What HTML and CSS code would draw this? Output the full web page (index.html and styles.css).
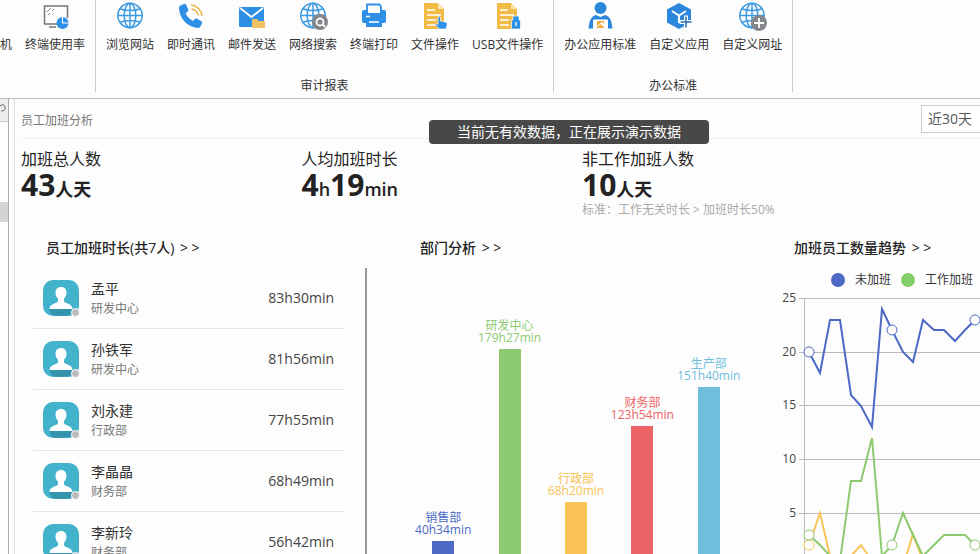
FILE: index.html
```html
<!DOCTYPE html>
<html lang="zh-CN">
<head>
    <meta charset="UTF-8">
    <meta name="viewport" content="width=device-width, initial-scale=1.0">
    <title>员工加班分析</title>
    <link rel="stylesheet" href="styles.css">
</head>
<body>

    <!-- Shared shapes -->
    <svg class="defs" width="0" height="0" aria-hidden="true">
        <symbol id="globe" viewBox="0 0 28 28">
            <g fill="none" stroke="#3d9be0" stroke-width="1.5">
                <circle cx="14" cy="14.5" r="12.2"/>
                <ellipse cx="14" cy="14.5" rx="5.8" ry="12.2"/>
                <path d="M14 2.3v24.4M1.8 14.5h24.4M4 7.8c5 2.4 15 2.4 20 0M4 21.2c5-2.4 15-2.4 20 0"/>
            </g>
        </symbol>
        <symbol id="doc" viewBox="0 0 28 28">
            <path fill="#f2bb45" d="M3 2h14l6 6v20H3z"/>
            <path fill="#fbe3ae" d="M17 2v6h6z"/>
            <path stroke="#fff" stroke-width="1.4" d="M6 9h8M6 14h14M6 19h9M6 24h9"/>
        </symbol>
        <symbol id="avatar" viewBox="0 0 36 36">
            <rect width="36" height="36" rx="10" fill="#43b2cb"/>
            <path fill="#3594ad" d="M6 29h24l-3 6c-4 1-14 1-18 0z"/>
            <path fill="#fff" d="M18 7c3.500 0 5.500 2.400 5.500 5.800 0 2.600-1 4.600-2.500 6v2.700c1 2 8.500 2.200 8.500 7.500h-23c0-5.300 7.500-5.500 8.500-7.500v-2.700c-1.500-1.400-2.500-3.400-2.500-6C12.500 9.400 14.500 7 18 7z"/>
        </symbol>
    </svg>

    <!-- Ribbon -->
    <nav class="ribbon">
        <div class="group group-first">
            <div class="tools">
                <button class="tool">
                    <svg class="icon"></svg>
                    <span>机</span>
                </button>
                <button class="tool">
                    <svg class="icon" viewBox="0 0 28 28">
                        <path fill="none" stroke="#777" stroke-width="1.500" d="M16 23H3.500V5h23v12"/>
                        <path fill="none" stroke="#888" d="M6 11l4-4M7 14l2-2M11 10l2-2"/>
                        <path stroke="#777" stroke-width="1.500" d="M8 26h7"/>
                        <circle cx="21.500" cy="22" r="6" fill="#2d8fe6"/>
                        <path fill="none" stroke="#fff" stroke-width="1.200" d="M21.500 15v7h6"/>
                    </svg>
                    <span>终端使用率</span>
                </button>
            </div>
        </div>

        <div class="group">
            <div class="tools">
                <button class="tool">
                    <svg class="icon"><use href="#globe"/></svg>
                    <span>浏览网站</span>
                </button>
                <button class="tool">
                    <svg class="icon" viewBox="0 0 28 28">
                        <path fill="#2d8fe6" d="M3.500 4.500L7 3c1-.4 1.800 0 2.200.8l2 4.500c.4 1 .1 1.600-.6 2.200l-1.900 1.700c1.500 3.500 4 6 7.300 7.800l1.900-1.900c.6-.6 1.400-.8 2.200-.3l4.200 2.500c.9.5 1 1.300.6 2.200l-1.500 3.100c-.5 1-1.400 1.500-2.700 1.300C10.500 26 3.200 18.500 2 8c-.1-1.600.4-2.900 1.500-3.500z"/>
                        <path fill="none" stroke="#eeb84c" stroke-width="1.500" d="M14 4c6 .5 10.500 5 11 11M14.500 8c3.500.5 6 3 6.500 6.500"/>
                    </svg>
                    <span>即时通讯</span>
                </button>
                <button class="tool">
                    <svg class="icon" viewBox="0 0 28 28">
                        <rect x="1" y="6" width="25" height="20" rx="1.500" fill="#2d8fe6"/>
                        <path fill="none" stroke="#fff" stroke-width="1.800" d="M2 7l11.500 9L25 7"/>
                        <path fill="#f2c262" d="M14 18h5l1.500 2H27v7H14z"/>
                    </svg>
                    <span>邮件发送</span>
                </button>
                <button class="tool">
                    <svg class="icon" viewBox="0 0 28 28">
                        <use href="#globe" width="28" height="28"/>
                        <circle cx="21" cy="21" r="8" fill="#85858c"/>
                        <circle cx="21" cy="21" r="3.500" fill="none" stroke="#fff" stroke-width="1.800"/>
                        <path stroke="#fff" stroke-width="1.800" d="M23.500 23.500l3 2.500"/>
                    </svg>
                    <span>网络搜索</span>
                </button>
                <button class="tool">
                    <svg class="icon" viewBox="0 0 28 28">
                        <path fill="none" stroke="#2d8fe6" stroke-width="1.800" d="M7 11V3.500h12.500l1.500 2V11"/>
                        <path fill="#2d8fe6" d="M4 9h4v3h12V9h4q2 0 2 2v9q0 2-2 2h-2v4H6v-4H4q-2 0-2-2v-9q0-2 2-2z"/>
                        <path stroke="#fff" stroke-width="1.500" d="M6 15.500h4M9 21h10"/>
                    </svg>
                    <span>终端打印</span>
                </button>
                <button class="tool">
                    <svg class="icon" viewBox="0 0 28 28">
                        <use href="#doc" width="28" height="28"/>
                        <path fill="#2d8fe6" stroke="#fff" stroke-width=".7" d="M17 16q1.500-1 2.500 0v4l5.500 1.200q1.500.5 1.200 2L25 28h-6.500L14 23.500q1-1.500 3 0z"/>
                    </svg>
                    <span>文件操作</span>
                </button>
                <button class="tool">
                    <svg class="icon" viewBox="0 0 28 28">
                        <use href="#doc" width="28" height="28"/>
                        <path fill="#2d8fe6" stroke="#fff" stroke-width=".7" d="M19 15h6v4h1.500v9h-9v-9H19z"/>
                        <path stroke="#fff" stroke-width="1.300" d="M22 21v4"/>
                    </svg>
                    <span>USB文件操作</span>
                </button>
            </div>
            <div class="group-name">审计报表</div>
        </div>

        <div class="group">
            <div class="tools">
                <button class="tool">
                    <svg class="icon" viewBox="0 0 28 28">
                        <circle cx="14.500" cy="7" r="6" fill="#2a87dc"/>
                        <path fill="#2a87dc" d="M10 14l4.500 2 4.500-2c4 1 6.500 4 7.500 13.500h-24C3.500 18 6 15 10 14z"/>
                        <rect x="7" y="18.500" width="15" height="9.500" rx="1" fill="#fff"/>
                        <path fill="#efae3f" d="M11 20h7v3l-2-2-5 4zM10 27l4.500-4 4.500 4z"/>
                    </svg>
                    <span>办公应用标准</span>
                </button>
                <button class="tool">
                    <svg class="icon" viewBox="0 0 28 28">
                        <path fill="#2a87dc" d="M14 2l12 6.500v13L14 28 2 21.500v-13z"/>
                        <path fill="none" stroke="#fff" stroke-width="2" d="M7 10l7 4.500 7-4.500M14 14.500V22"/>
                        <path stroke="#fff" stroke-width="4" d="M14.500 21h13M21 14.500v13"/>
                        <path stroke="#2a70b8" stroke-width="1.500" d="M15.500 21h11M21 15.500v11"/>
                    </svg>
                    <span>自定义应用</span>
                </button>
                <button class="tool">
                    <svg class="icon" viewBox="0 0 28 28">
                        <use href="#globe" width="28" height="28"/>
                        <circle cx="21" cy="22" r="8" fill="#85858c"/>
                        <path stroke="#fff" stroke-width="1.800" d="M16 22h10M21 17v10"/>
                    </svg>
                    <span>自定义网址</span>
                </button>
            </div>
            <div class="group-name">办公标准</div>
        </div>
    </nav>

    <div class="main">
        <!-- Collapsed tree on the left -->
        <aside class="sidebar">
            <button class="search" aria-label="搜索">
                <svg width="8" height="12" viewBox="0 0 8 12"><path fill="none" stroke="#666" d="M0 4q4-3 5 1t-4 4"/></svg>
            </button>
            <div class="thumb"></div>
        </aside>

        <section class="panel">
            <header class="panel-header">
                <span class="panel-title">员工加班分析</span>
                <select class="range" aria-label="时间范围">
                    <option>近30天</option>
                </select>
            </header>
            <div class="toast" role="status">当前无有效数据，正在展示演示数据</div>

            <div class="dashboard">
                <div class="stats">
                    <div class="stat">
                        <div class="stat-name">加班总人数</div>
                        <div class="stat-value"><b>43</b>人天</div>
                    </div>
                    <div class="stat">
                        <div class="stat-name">人均加班时长</div>
                        <div class="stat-value"><b>4</b>h<b>19</b>min</div>
                    </div>
                    <div class="stat">
                        <div class="stat-name">非工作加班人数</div>
                        <div class="stat-value"><b>10</b>人天</div>
                        <div class="stat-note">标准：工作无关时长 &gt; 加班时长50%</div>
                    </div>
                </div>

                <div class="charts">
                    <!-- Employee ranking -->
                    <div class="chart">
                        <h2><a href="#">员工加班时长(共7人) <span class="more">&gt; &gt;</span></a></h2>
                        <div class="ranking">
                            <ul class="people">
                                <li class="person">
                                    <div class="avatar"><svg width="36" height="36"><use href="#avatar"/></svg></div>
                                    <div class="who"><div class="name">孟平</div><div class="dept">研发中心</div></div>
                                    <div class="time">83h30min</div>
                                </li>
                                <li class="person">
                                    <div class="avatar"><svg width="36" height="36"><use href="#avatar"/></svg></div>
                                    <div class="who"><div class="name">孙铁军</div><div class="dept">研发中心</div></div>
                                    <div class="time">81h56min</div>
                                </li>
                                <li class="person">
                                    <div class="avatar"><svg width="36" height="36"><use href="#avatar"/></svg></div>
                                    <div class="who"><div class="name">刘永建</div><div class="dept">行政部</div></div>
                                    <div class="time">77h55min</div>
                                </li>
                                <li class="person">
                                    <div class="avatar"><svg width="36" height="36"><use href="#avatar"/></svg></div>
                                    <div class="who"><div class="name">李晶晶</div><div class="dept">财务部</div></div>
                                    <div class="time">68h49min</div>
                                </li>
                                <li class="person">
                                    <div class="avatar"><svg width="36" height="36"><use href="#avatar"/></svg></div>
                                    <div class="who"><div class="name">李新玲</div><div class="dept">财务部</div></div>
                                    <div class="time">56h42min</div>
                                </li>
                            </ul>
                        </div>
                    </div>

                    <!-- Departments -->
                    <div class="chart">
                        <h2><a href="#">部门分析 <span class="more">&gt; &gt;</span></a></h2>
                        <div class="bars">
                            <div class="bar-col blue">
                                <div>销售部<br>40h34min</div>
                                <div class="bar" style="height: 56px"></div>
                            </div>
                            <div class="bar-col green">
                                <div>研发中心<br>179h27min</div>
                                <div class="bar" style="height: 248px"></div>
                            </div>
                            <div class="bar-col yellow">
                                <div>行政部<br>68h20min</div>
                                <div class="bar" style="height: 95px"></div>
                            </div>
                            <div class="bar-col red">
                                <div>财务部<br>123h54min</div>
                                <div class="bar" style="height: 171px"></div>
                            </div>
                            <div class="bar-col cyan">
                                <div>生产部<br>151h40min</div>
                                <div class="bar" style="height: 210px"></div>
                            </div>
                        </div>
                    </div>

                    <!-- Trend -->
                    <div class="chart">
                        <h2><a href="#">加班员工数量趋势 <span class="more">&gt; &gt;</span></a></h2>
                        <div class="legend">
                            <span class="legend-item blue"><i></i>未加班</span>
                            <span class="legend-item green"><i></i>工作加班</span>
                        </div>
                        <svg class="trend" width="374" height="288" viewBox="0 2 374 288">
                            <g class="grid">
                                <path d="M30 8.500h344M30 62.500h344M30 115.500h344M30 169.500h344M30 223.500h344M30 277.500h344"/>
                                <path d="M35.500 8v270"/>
                            </g>
                            <g class="ticks">
                                <text x="27" y="12">25</text>
                                <text x="27" y="66">20</text>
                                <text x="27" y="119">15</text>
                                <text x="27" y="173">10</text>
                                <text x="27" y="227">5</text>
                            </g>
                            <g class="line yellow">
                                <polyline points="40,255 51,223 61,266 71,277 82,266 92,255 103,271 113,277 123,277 134,277 144,244 154,271 165,277"/>
                                <circle cx="40" cy="255" r="5"/>
                            </g>
                            <g class="line green">
                                <polyline points="40,245 51,255 61,266 71,271 82,191 92,191 103,148 113,266 123,255 134,223 144,245 154,266 165,255 175,245 186,245 196,245 206,255"/>
                                <circle cx="40" cy="245" r="5"/>
                                <circle cx="123" cy="255" r="5"/>
                                <circle cx="206" cy="255" r="5"/>
                            </g>
                            <g class="line blue">
                                <polyline points="40,62 51,83 61,30 71,30 82,105 92,116 103,137 113,19 123,40 134,62 144,72 154,30 165,40 175,40 186,51 196,40 206,30"/>
                                <circle cx="40" cy="62" r="5"/>
                                <circle cx="123" cy="40" r="5"/>
                                <circle cx="206" cy="30" r="5"/>
                            </g>
                        </svg>
                    </div>
                </div>
            </div>
        </section>
    </div>

</body>
</html>
```
FILE: styles.css
```css
* {
    box-sizing: border-box;
}

body {
    margin: 0;
    height: 100vh;
    overflow: hidden;
    display: flex;
    flex-direction: column;
    background-color: #fdfdfd;
    color: #333;
    font-family: "Open Sans", "Noto Sans CJK SC", sans-serif;
    font-size: 12px;
    line-height: 16px;
}

button {
    border: none;
    background: none;
    padding: 0;
    font: inherit;
    color: inherit;
    cursor: pointer;
}

a {
    color: inherit;
    text-decoration: none;
}

.defs {
    position: absolute;
}

.blue { color: #4c69c6; }
.green { color: #8dca70; }
.yellow { color: #f9c455; }
.red { color: #ee6365; }
.cyan { color: #70bddc; }

/* Ribbon */

.ribbon {
    display: flex;
    flex: none;
    padding-bottom: 6px;
    border-bottom: 1px solid #bbb;
}

.group {
    display: flex;
    flex-direction: column;
    justify-content: space-between;
    height: 92px;
    padding: 1px 10px 0;
    border-right: 1px solid #ccc;
}

.group-first {
    padding-left: 0;
}

.tools {
    display: flex;
    gap: 13px;
}

.tool {
    display: flex;
    flex-direction: column;
    align-items: center;
    gap: 8px;
    white-space: nowrap;
}

.group-first .tool:first-child {
    width: 12px;
}

.icon {
    width: 28px;
    height: 28px;
    overflow: visible;
}

.group-name {
    text-align: center;
    line-height: 12px;
}

/* Sidebar */

.main {
    display: flex;
    flex: 1;
    min-height: 0;
}

.sidebar {
    flex: none;
    width: 9px;
    border-right: 1px solid #aaa;
}

.search {
    display: block;
    width: 8px;
    height: 23px;
    background-color: #eee;
    border-bottom: 1px solid #ccc;
}

.thumb {
    height: 20px;
    margin-top: 80px;
    background-color: #d4d4d4;
}

/* Panel */

.panel {
    position: relative;
    flex: 1;
    min-width: 0;
    margin-left: 5px;
    padding-left: 6px;
    border-left: 1px solid #ddd;
}

.panel-header {
    display: flex;
    justify-content: space-between;
    align-items: center;
    height: 40px;
    margin-right: -20px;
    border-bottom: 1px solid #eee;
}

.panel-title {
    padding-top: 4px;
    color: #777;
}

.range {
    appearance: none;
    width: 79px;
    height: 28px;
    padding: 0 6px;
    border: 1px solid #ccc;
    border-radius: 0;
    background-color: #fff;
    color: #555;
    font: inherit;
    font-size: 14px;
}

.toast {
    position: absolute;
    top: 21px;
    left: 414px;
    width: 280px;
    line-height: 24px;
    border-radius: 4px;
    background-color: #484848;
    color: #fff;
    font-size: 14px;
    text-align: center;
}

/* The dashboard is wider than the visible panel */
.dashboard {
    width: 117%;
}

.stats {
    display: grid;
    grid-template-columns: repeat(4, 1fr);
    height: 99px;
    padding-top: 10px;
    color: #222;
}

.stat-name {
    font-size: 16px;
    line-height: 20px;
}

.stat-value {
    font-size: 18px;
    font-weight: 600;
    line-height: 32px;
}

.stat-value b {
    font-size: 30px;
    font-weight: 700;
}

.stat-note {
    color: #aaa;
    line-height: 10px;
}

.charts {
    display: grid;
    grid-template-columns: repeat(3, 1fr);
}

.chart h2 {
    margin: 0 0 10px 25px;
    color: #222;
    font-size: 14px;
    font-weight: 500;
    line-height: 20px;
}

.more {
    padding-left: 2px;
}

.ranking {
    height: 329px;
    padding: 0 21px 0 12px;
    margin-right: 28px;
    border-right: 2px solid #999;
}

.people {
    margin: 0;
    padding: 0;
    list-style: none;
}

.person {
    display: flex;
    align-items: center;
    height: 61px;
    padding: 0 10px;
    border-bottom: 1px solid #e6e6e6;
}

.avatar {
    position: relative;
    height: 36px;
    margin-right: 12px;
}

.avatar::after {
    content: "";
    position: absolute;
    right: -1px;
    bottom: -1px;
    width: 7px;
    height: 7px;
    border: 1px solid #fff;
    border-radius: 50%;
    background-color: #bbb;
}

.who {
    flex: 1;
}

.name {
    font-size: 14px;
    line-height: 22px;
}

.dept {
    color: #777;
    line-height: 18px;
}

.time {
    color: #444;
    font-size: 14px;
}

.bars {
    display: grid;
    grid-template-columns: repeat(5, 1fr);
    align-items: end;
    height: 329px;
    margin: 0 27px 0 15px;
    line-height: 12px;
    text-align: center;
}

.bar {
    width: 22px;
    margin: 5px auto 0;
    background-color: currentColor;
}

.legend {
    display: flex;
    gap: 10px;
    margin-left: 62px;
    line-height: 24px;
}

.legend-item {
    display: flex;
    align-items: center;
    gap: 10px;
}

.legend-item.blue,
.legend-item.green {
    color: #333;
}

.legend i {
    width: 14px;
    height: 14px;
    border-radius: 50%;
    background-color: #4c69c6;
}

.legend .green i {
    background-color: #84ce69;
}

.trend {
    display: block;
}

.grid path {
    fill: none;
    stroke: #bbb;
}

.ticks {
    fill: #444;
    text-anchor: end;
}

.line polyline {
    fill: none;
    stroke: currentColor;
    stroke-width: 2;
}

.line circle {
    fill: #fff;
    stroke: currentColor;
}
```
